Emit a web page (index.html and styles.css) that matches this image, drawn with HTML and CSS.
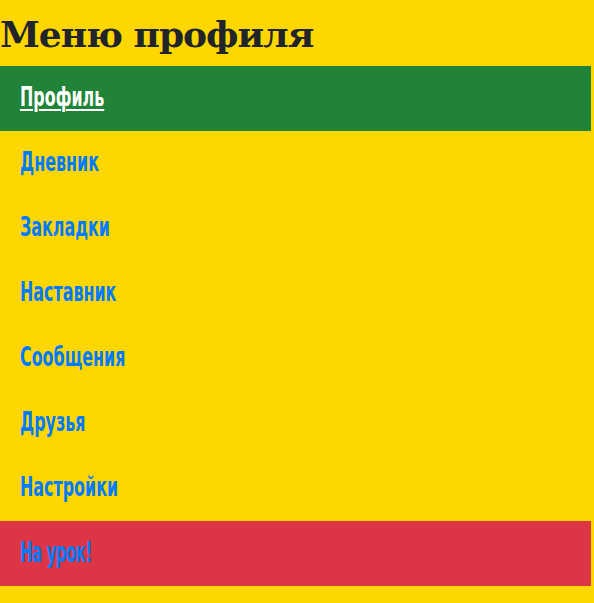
FILE: index.html
```html
<!DOCTYPE html>
<html lang="ru">
<head>
<meta charset="utf-8">
<title>Меню профиля</title>
<link rel="stylesheet" href="styles.css">
</head>
<body>
<div class="page">
  <h1 class="title">Меню профиля</h1>
  <nav class="menu">
    <a class="item item-active" href="#"><span class="label">Профиль</span></a>
    <a class="item" href="#"><span class="label">Дневник</span></a>
    <a class="item" href="#"><span class="label">Закладки</span></a>
    <a class="item" href="#"><span class="label">Наставник</span></a>
    <a class="item" href="#"><span class="label">Сообщения</span></a>
    <a class="item" href="#"><span class="label">Друзья</span></a>
    <a class="item" href="#"><span class="label">Настройки</span></a>
    <a class="item item-lesson" href="#"><span class="label label-tight">На урок!</span></a>
  </nav>
</div>
</body>
</html>
```
FILE: styles.css
```css
html, body {
  margin: 0;
  padding: 0;
  background: #ffd700;
}
.page {
  width: 591px;
}
.title {
  margin: 0;
  height: 66px;
  box-sizing: border-box;
  padding-top: 12px;
  font-family: "DejaVu Serif", serif;
  font-weight: bold;
  font-size: 36px;
  line-height: 44px;
  color: #212529;
  letter-spacing: -1px;
}
.menu {
  display: flex;
  flex-direction: column;
}
.item {
  display: flex;
  align-items: center;
  height: 65px;
  padding: 0 20px;
  font-family: "DejaVu Sans Condensed", sans-serif;
  font-weight: bold;
  font-size: 26px;
  color: #007bff;
  text-decoration: none;
}
.label {
  display: inline-block;
  transform: scaleX(0.68);
  transform-origin: left center;
  margin-top: -4px;
}
.label-tight {
  font-size: 29px;
  transform: scaleX(0.58);
  letter-spacing: -1px;
}
.item-active {
  background: #208337;
  color: #ffffff;
}
.item-active .label {
  text-decoration: underline;
  text-underline-offset: 3px;
  text-decoration-thickness: 2px;
}
.item-lesson {
  background: #dc3545;
}
```
